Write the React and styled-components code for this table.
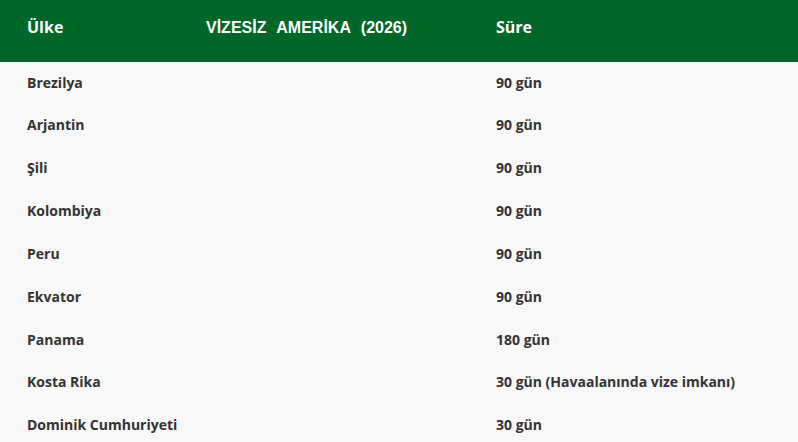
import React from "react";
import styled, { createGlobalStyle } from "styled-components";

const GlobalStyle = createGlobalStyle`
  html, body {
    margin: 0;
    padding: 0;
    background: #f8f8f8;
  }
  body {
    font-family: "Open Sans", "Noto Sans", sans-serif;
  }
`;

const Table = styled.section`
  width: 798px;
  background: #f8f8f8;
`;

const Head = styled.header`
  display: grid;
  grid-template-columns: 179px 290px 1fr;
  height: 62px;
  padding: 16px 0 0 27px;
  box-sizing: border-box;
  background: #006629;
  color: #ffffff;
`;

const HeadCell = styled.div`
  font-family: "Open Sans", "Noto Sans", sans-serif;
  font-size: 16px;
  font-weight: 700;
  line-height: 22px;
`;

const Title = styled.div`
  font-family: "Liberation Sans", Arial, sans-serif;
  font-size: 16px;
  font-weight: 700;
  line-height: 22px;
  padding-top: 1px;
  word-spacing: 6px;
`;

const Row = styled.div`
  display: grid;
  grid-template-columns: 469px 1fr;
  height: 42.85px;
  padding: 10.5px 0 0 27px;
  box-sizing: border-box;
`;

const Cell = styled.div`
  font-size: 14px;
  font-weight: 700;
  line-height: 20px;
  color: #333333;
`;

const rows = [
  ["Brezilya", "90 gün"],
  ["Arjantin", "90 gün"],
  ["Şili", "90 gün"],
  ["Kolombiya", "90 gün"],
  ["Peru", "90 gün"],
  ["Ekvator", "90 gün"],
  ["Panama", "180 gün"],
  ["Kosta Rika", "30 gün (Havaalanında vize imkanı)"],
  ["Dominik Cumhuriyeti", "30 gün"],
];

const App = () => {
  return (
    <>
      <GlobalStyle />
      <Table>
        <Head>
          <HeadCell>Ülke</HeadCell>
          <Title>VİZESİZ AMERİKA (2026)</Title>
          <HeadCell>Süre</HeadCell>
        </Head>
        {rows.map(([country, time]) => (
          <Row key={country}>
            <Cell>{country}</Cell>
            <Cell>{time}</Cell>
          </Row>
        ))}
      </Table>
    </>
  );
};

export default App;
